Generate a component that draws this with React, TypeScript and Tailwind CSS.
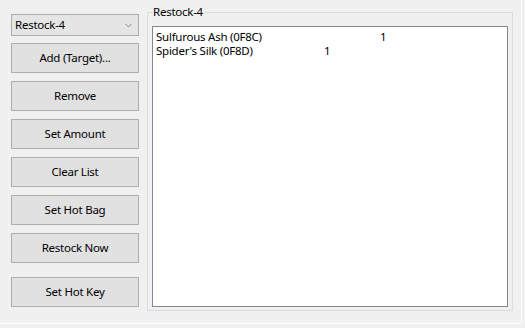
import { ChevronDown } from "lucide-react";

const buttons = ["Add (Target)...", "Remove", "Set Amount", "Clear List", "Set Hot Bag", "Restock Now"];

const items = [
  { name: "Sulfurous Ash (0F8C)", amount: "1", pad: "w-[224px]" },
  { name: "Spider's Silk (0F8D)", amount: "1", pad: "w-[168px]" },
];

function WinButton({ label }: { label: string }) {
  return (
    <button className="h-[30px] w-[128px] border border-[#adadad] bg-[#e1e1e1] text-[11.5px] tracking-[-0.25px] text-black">
      {label}
    </button>
  );
}

export default function App() {
  return (
    <div className="h-[328px] w-[525px] bg-[#f0f0f0] font-['Noto_Sans','Liberation_Sans',sans-serif] text-[11.5px] tracking-[-0.25px] text-black">
      <div className="flex h-[324px] w-[522px] border-r border-b border-white">
        {/* left column */}
        <div className="flex w-[147px] flex-col pt-[14px] pl-[11px]">
          <div className="flex h-[22px] w-[128px] items-center justify-between border border-[#acacac] bg-[#e5e5e5] pr-[4px] pl-[3px]">
            <span className="leading-none">Restock-4</span>
            <ChevronDown className="h-[11px] w-[11px] text-[#404040]" strokeWidth={1.25} />
          </div>
          <div className="mt-[7px] flex flex-col gap-[8px]">
            {buttons.map((b) => (
              <WinButton key={b} label={b} />
            ))}
          </div>
          <div className="mt-[14px]">
            <WinButton label="Set Hot Key" />
          </div>
        </div>

        {/* group box */}
        <div className="relative mt-[12px] h-[299px] w-[366px] border border-[#dcdcdc]">
          <span className="absolute -top-[9px] left-[4px] bg-[#f0f0f0] px-[1px] leading-[16px]">Restock-4</span>
          <div className="mt-[13px] ml-[4px] h-[281px] w-[356px] border border-[#828790] bg-white pt-[3px] pl-[3px]">
            {items.map((it) => (
              <div key={it.name} className="flex h-[14px] items-center leading-none">
                <span className={it.pad}>{it.name}</span>
                <span>{it.amount}</span>
              </div>
            ))}
          </div>
        </div>
      </div>
    </div>
  );
}
